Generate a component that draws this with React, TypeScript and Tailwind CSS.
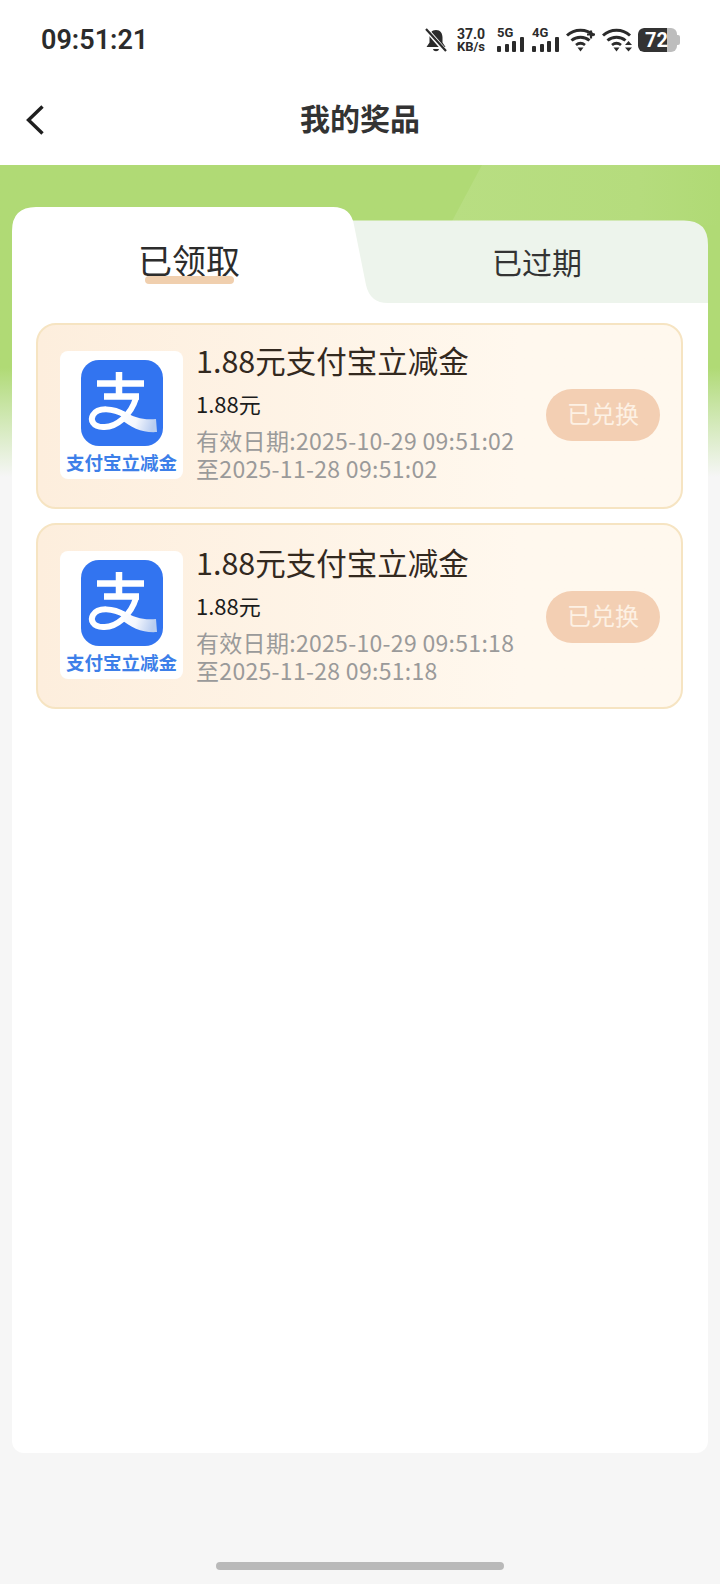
import React from 'react';

const PRIZES = [
  { start: '2025-10-29 09:51:02', end: '2025-11-28 09:51:02', textClass: 'pb-[9px]', buttonClass: 'mb-[2px]' },
  { start: '2025-10-29 09:51:18', end: '2025-11-28 09:51:18', textClass: 'pb-[4px]', buttonClass: 'mt-[2px]' },
];

const WifiIcon = ({ extra }: { extra: 'plus' | 'arrows' }) => (
  <svg width="31" height="24" viewBox="0 0 31 24" className="text-[#2b2b2b]">
    <path d="M1 7.5C8.500 .5 20.500 .5 28 7.500" fill="none" stroke="currentColor" strokeWidth="3" />
    <path d="M5.500 12.500C10.500 8 18.500 8 23.500 12.500" fill="none" stroke="currentColor" strokeWidth="3" />
    <path d="M10 17C12.800 14.800 16.200 14.800 19 17" fill="none" stroke="currentColor" strokeWidth="2.800" />
    <path d="M11.500 19.500H17.500L14.500 23.500Z" fill="currentColor" />
    {extra === 'plus' ? (
      <path d="M21 6.500H29M25 2.500V10.500" stroke="currentColor" strokeWidth="2.200" />
    ) : (
      <path d="M26.500 13L30 17H23ZM26.500 23.500L23 19.500H30Z" fill="currentColor" />
    )}
  </svg>
);

const SignalBars = ({ label }: { label: string }) => (
  <div className="flex flex-col w-[27px] h-[24px] justify-between">
    <span className="text-[13px] leading-[10px] font-bold text-[#2b2b2b] font-['Roboto',sans-serif]">{label}</span>
    <div className="flex items-end gap-[3.500px] h-[14px]">
      <div className="w-[4px] h-[6px] rounded-[1px] bg-[#2b2b2b]" />
      <div className="w-[4px] h-[8px] rounded-[1px] bg-[#2b2b2b]" />
      <div className="w-[4px] h-[11px] rounded-[1px] bg-[#2b2b2b]" />
      <div className="w-[4px] h-[15px] rounded-[1px] bg-[#2b2b2b]" />
    </div>
  </div>
);

const StatusBar = () => (
  <div className="h-[72px] pt-[8px] pl-[41px] pr-[40px] flex items-center justify-between font-['Roboto',sans-serif]">
    <span className="text-[27px] font-semibold tracking-[0px] text-[#2b2b2b]">09:51:21</span>
    <div className="flex items-center">
      <svg width="22" height="25" viewBox="0 0 22 25" className="text-[#2b2b2b]">
        <path d="M11 2C6.500 2 4.500 5.500 4.500 9.500V14.500L1.500 19H20.500L17.500 14.500V9.500C17.500 5.500 15.500 2 11 2Z" fill="currentColor" />
        <path d="M8 21H14C13.500 24 8.500 24 8 21Z" fill="currentColor" />
        <path d="M1 1L21 24" stroke="#ffffff" strokeWidth="4.500" />
        <path d="M1 1L21 23" stroke="currentColor" strokeWidth="2.200" />
      </svg>
      <div className="ml-[9px] w-[30px] flex flex-col items-center text-[#2b2b2b] font-bold">
        <span className="text-[14px] leading-[13px]">37.0</span>
        <span className="text-[13px] leading-[12px]">KB/s</span>
      </div>
      <div className="ml-[11px]"><SignalBars label="5G" /></div>
      <div className="ml-[8px]"><SignalBars label="4G" /></div>
      <div className="ml-[7px]"><WifiIcon extra="plus" /></div>
      <div className="ml-[5px]"><WifiIcon extra="arrows" /></div>
      <div className="ml-[5px] flex items-center">
        <div className="w-[39px] h-[24px] rounded-[6px] bg-[#bdbdbd] overflow-hidden">
          <div className="w-[29px] h-full bg-[#333333] rounded-l-[6px] flex items-center justify-end">
            <span className="text-[20px] leading-[24px] font-bold text-white translate-x-[1px]">72</span>
          </div>
        </div>
        <div className="w-[3px] h-[10px] rounded-r-[2px] bg-[#bdbdbd]" />
      </div>
    </div>
  </div>
);

const NavBar = () => (
  <div className="relative h-[93px] flex items-center justify-center pb-[3px]">
    <svg width="20" height="32" viewBox="0 0 20 32" className="absolute left-[25px] top-[32px] text-[#1f1f1f]">
      <path d="M17.500 2.500L3.500 16L17.500 29.500" fill="none" stroke="currentColor" strokeWidth="3.400" />
    </svg>
    <span className="text-[30px] font-bold text-[#333333]">我的奖品</span>
  </div>
);

const AlipayLogo = () => (
  <svg width="82" height="86" viewBox="0 0 82 86">
    <defs>
      <linearGradient id="ribbon" x1="0" y1="0" x2="1" y2="0.200">
        <stop offset="0" stopColor="#ffffff" />
        <stop offset="0.500" stopColor="#f4f7fd" />
        <stop offset="1" stopColor="#b9cdf0" />
      </linearGradient>
    </defs>
    <rect width="82" height="86" rx="18" fill="#3274f0" />
    <path d="M16 23.500H63M38 12V36M23 36.500H58" stroke="#ffffff" strokeWidth="6.500" fill="none" />
    <path d="M55 38C50 55 35 68 22 67C12 67 9 60 12 55C17 47 32 48 44 55" stroke="#ffffff" strokeWidth="6" fill="none" />
    <path d="M42 51C54 58 62 60 75 59L76 72C62 73 50 68 40 59Z" fill="url(#ribbon)" />
  </svg>
);

const PrizeCard = ({ start, end, textClass, buttonClass }: { start: string; end: string; textClass: string; buttonClass: string }) => (
  <div className="h-[186px] rounded-[20px] border-2 border-[#f6e4c2] bg-gradient-to-r from-[#fdeedd] to-[#fff8ee] to-75% pl-[22px] pr-[21px] flex items-center">
    <div className="w-[123px] h-[128px] mb-[2px] shrink-0 rounded-[8px] bg-white flex flex-col items-center pt-[9px]">
      <AlipayLogo />
      <span className="mt-[5px] text-[18.500px] leading-[22px] font-bold whitespace-nowrap text-[#3d7fe9]">支付宝立减金</span>
    </div>
    <div className={`ml-[13px] flex-1 min-w-0 ${textClass}`}>
      <div className="text-[30.500px] leading-[36px] text-[#33291f]">1.88元支付宝立减金</div>
      <div className="mt-[10px] text-[22px] leading-[30px] text-[#1c1c1c]">1.88元</div>
      <div className="mt-[8px] text-[23px] leading-[28px] tracking-[0.3px] whitespace-nowrap text-[#9a9a9a]">
        <div>有效日期:{start}</div>
        <div>至{end}</div>
      </div>
    </div>
    <div className={`w-[114px] h-[52px] pb-[5px] shrink-0 rounded-full bg-[#f3cfb3] flex items-center justify-center text-[24px] text-[#fdf1e4] ${buttonClass}`}>
      已兑换
    </div>
  </div>
);

const TabStrip = () => (
  <div className="relative h-[96px] grid grid-cols-[354px_342px]">
    <svg width="696" height="96" viewBox="0 0 696 96" className="absolute left-0 top-0">
      <path d="M320 13.500H672Q696 13.500 696 37.500V96H340Z" fill="#edf4ec" />
      <path d="M0 96V24Q0 0 24 0H321Q339 0 342 18L354 78Q358 96 376 96Z" fill="#ffffff" />
    </svg>
    <div className="relative flex flex-col items-center pt-[33px]">
      <span className="text-[34px] leading-[40px] text-[#2c2c2c]">已领取</span>
      <div className="-mt-[4px] w-[89px] h-[8px] rounded-full bg-[#f0cfae]" />
    </div>
    <div className="relative flex justify-center pt-[35px]">
      <span className="text-[30px] leading-[38px] text-[#333333]">已过期</span>
    </div>
  </div>
);

export default function App() {
  return (
    <div className="relative w-[720px] h-[1584px] overflow-hidden flex flex-col bg-[#f6f6f6] font-['Noto_Sans_CJK_SC','Noto_Sans',sans-serif]">
      <div className="bg-white">
        <StatusBar />
        <NavBar />
      </div>

      <div className="relative flex-1 flex flex-col">
        <div className="absolute inset-x-0 top-0 h-[312px] bg-gradient-to-b from-[#b0da75] via-[#b0da75] via-65% to-[#f6f6f6]" />
        <svg width="270" height="60" viewBox="0 0 270 60" className="absolute right-0 top-0">
          <defs>
            <linearGradient id="shine" x1="0" y1="0" x2="1" y2="0">
              <stop offset="0" stopColor="#b8de82" />
              <stop offset="0.700" stopColor="#b5dc7d" />
              <stop offset="1" stopColor="#b0da75" />
            </linearGradient>
          </defs>
          <path d="M32 0H270V60H0Z" fill="url(#shine)" />
        </svg>

        <div className="relative mt-[42px] mx-[12px] flex flex-col">
          <TabStrip />
          <div className="h-[1150px] bg-white rounded-b-[12px] pl-[24px] pr-[25px] pt-[20px] flex flex-col gap-[14px]">
            {PRIZES.map((p) => (
              <PrizeCard key={p.start} start={p.start} end={p.end} textClass={p.textClass} buttonClass={p.buttonClass} />
            ))}
          </div>
        </div>

        <div className="mt-auto mb-[14px] mx-auto w-[288px] h-[8px] rounded-full bg-[#b9b9b9]" />
      </div>
    </div>
  );
}
